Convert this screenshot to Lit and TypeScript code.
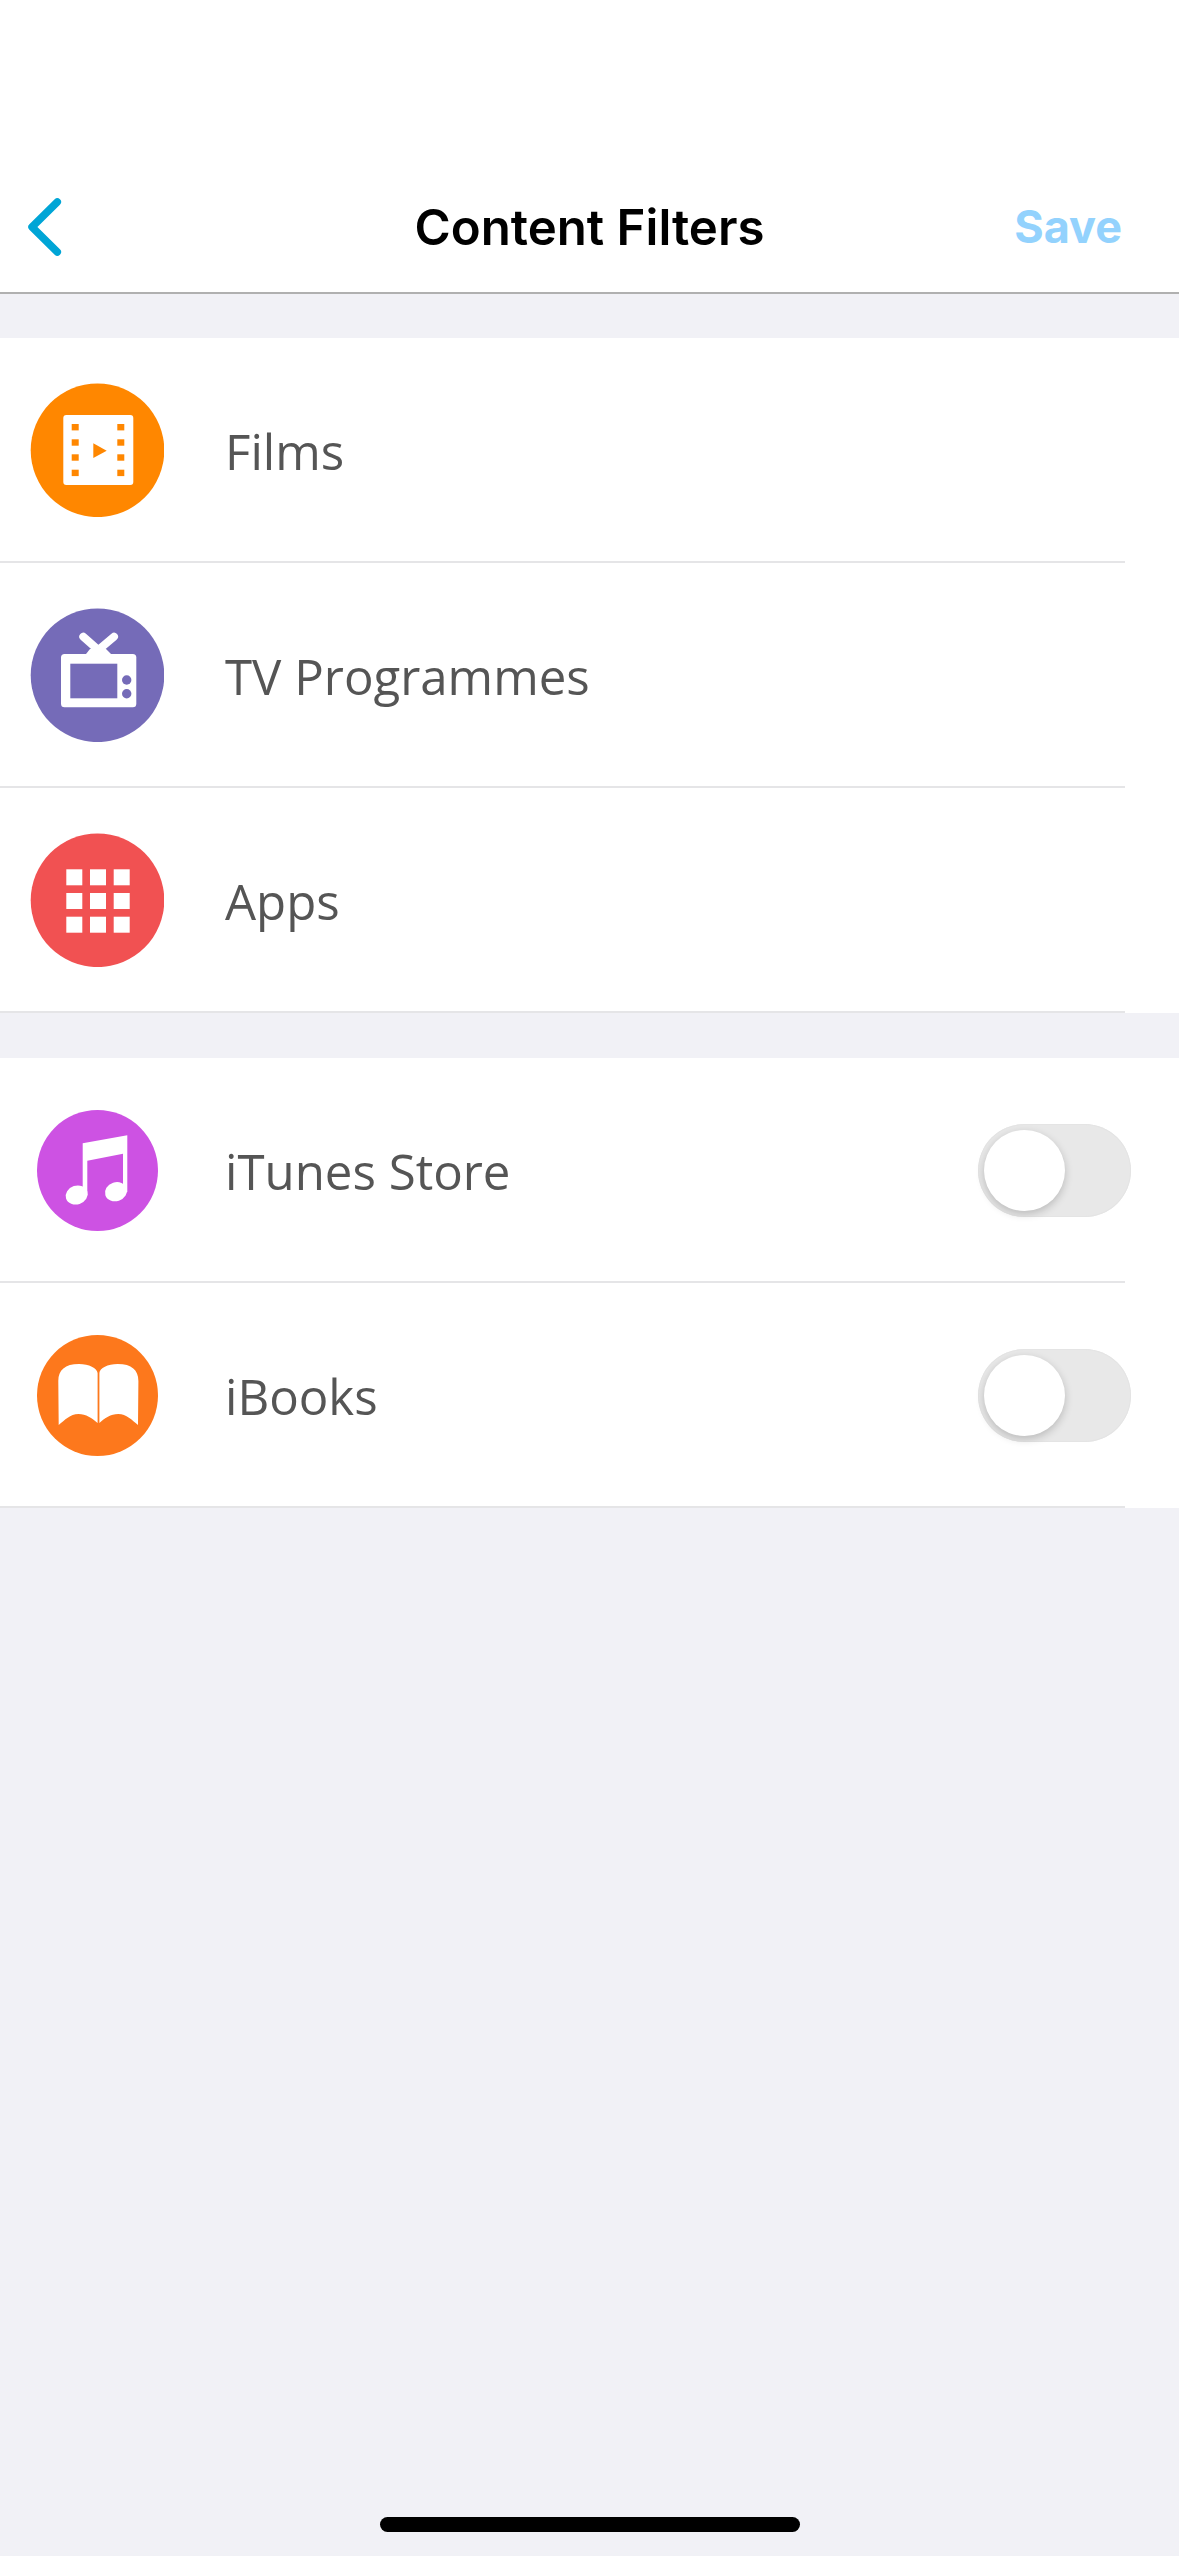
import { LitElement, html, css, svg } from "lit";
import { customElement } from "lit/decorators.js";

const filmHoles = [41, 56.3, 71.3, 86.7];
const appCoords = [36.3, 60, 83.7];

const icons = {
  films: html`<svg class="icon large" viewBox="0 0 134 134">
    <circle cx="67.5" cy="67.3" r="66.8" fill="#ff8700"></circle>
    <rect x="33.3" y="32" width="70" height="70" rx="3" fill="#fff"></rect>
    ${filmHoles.map(
      (y) => svg`<rect x="41.7" y=${y} width="7" height="6.4" fill="#ff8700"></rect>
        <rect x="87.3" y=${y} width="7" height="6.4" fill="#ff8700"></rect>`
    )}
    <path d="M63.3 60.3L76.7 67.7L63.3 75Z" fill="#ff8700"></path>
  </svg>`,
  tv: html`<svg class="icon large" viewBox="0 0 134 134">
    <circle cx="67.5" cy="67.3" r="66.8" fill="#756bb8"></circle>
    <path d="M53.3 28.7L68.3 42L84 28.7" fill="none" stroke="#fff" stroke-width="8" stroke-linecap="round" stroke-linejoin="round"></path>
    <path d="M56 46L60 41H76L81 46Z" fill="#fff"></path>
    <rect x="31" y="46" width="75.3" height="53.3" rx="3.5" fill="#fff"></rect>
    <rect x="40.3" y="55.7" width="47" height="34.6" fill="#756bb8"></rect>
    <circle cx="96.7" cy="72" r="4.7" fill="#756bb8"></circle>
    <circle cx="96.7" cy="85.7" r="4.7" fill="#756bb8"></circle>
  </svg>`,
  apps: html`<svg class="icon large" viewBox="0 0 134 134">
    <circle cx="67.5" cy="67.3" r="66.8" fill="#f15152"></circle>
    ${appCoords.map((y) =>
      appCoords.map((x) => svg`<rect x=${x} y=${y} width="16" height="16" fill="#fff"></rect>`)
    )}
  </svg>`,
  music: html`<svg class="icon small" viewBox="0 0 121 121">
    <circle cx="60.5" cy="60.5" r="60.5" fill="#cd52e3"></circle>
    <path d="M45.7 33.3L90.3 25.3V82H86V43.7L50.3 50.7V85H45.7Z" fill="#fff"></path>
    <ellipse cx="39.7" cy="85" rx="11.2" ry="9.4" transform="rotate(-18 39.7 85)" fill="#fff"></ellipse>
    <ellipse cx="79" cy="81.7" rx="11.2" ry="9.4" transform="rotate(-18 79 81.7)" fill="#fff"></ellipse>
  </svg>`,
  books: html`<svg class="icon small" viewBox="0 0 121 121">
    <circle cx="60.5" cy="60.5" r="60.5" fill="#fd781c"></circle>
    <path d="M21.7 90L21.3 46C21.3 35 28 29 42 29C52 29 60 33 60.6 38V88C55 83 49 79 41.5 79C33 79 28 85 21.7 90Z" fill="#fff"></path>
    <path d="M101 90L101.4 46C101.4 35 94.7 29 80.7 29C70.7 29 62.7 33 62.4 38V88C67.7 83 73.7 79 81.2 79C89.7 79 94.7 85 101 90Z" fill="#fff"></path>
  </svg>`,
};

@customElement("app-root")
export class AppRoot extends LitElement {
  static styles = css`
    :host {
      display: block;
      width: 1179px;
      height: 2556px;
      overflow: hidden;
      background: #f1f1f6;
    }
    .page {
      display: flex;
      flex-direction: column;
      height: 100%;
    }
    .nav {
      box-sizing: border-box;
      height: 294px;
      padding-top: 161px;
      background: #fff;
      border-bottom: 2px solid #b0b0b0;
      display: grid;
      grid-template-columns: 1fr auto 1fr;
      align-items: center;
      font-family: Inter, "Liberation Sans", sans-serif;
    }
    .back {
      display: block;
      width: 40px;
      height: 60px;
      margin-left: 25px;
    }
    .title {
      font-size: 49.2px;
      font-weight: 600;
      color: #000;
    }
    .save {
      justify-self: end;
      margin-right: 57px;
      font-size: 45px;
      font-weight: 700;
      color: #93d2fd;
    }
    .section {
      background: #fff;
      margin-top: 44px;
    }
    .section + .section {
      margin-top: 45px;
    }
    .row {
      height: 225px;
      display: flex;
      align-items: center;
      box-sizing: border-box;
      position: relative;
    }
    .slot {
      width: 195px;
      display: flex;
      flex: none;
    }
    .icon {
      display: block;
    }
    .large {
      width: 134px;
      height: 134px;
      margin: 0 0 1px 30px;
    }
    .small {
      width: 121px;
      height: 121px;
      margin-left: 37px;
    }
    .label {
      margin-left: 30px;
      font-family: "Open Sans", "Liberation Sans", sans-serif;
      font-size: 49.2px;
      color: #555555;
    }
    .rule {
      position: absolute;
      left: 0;
      right: 54px;
      bottom: 0;
      height: 2px;
      background: #e5e5e7;
    }
    .toggle {
      position: relative;
      margin-left: auto;
      margin-right: 48px;
      width: 153px;
      height: 93px;
      border-radius: 47px;
      background: #e8e8e8;
      box-shadow: inset 0 0 0 1px #e4e4e4;
      flex: none;
    }
    .knob {
      position: absolute;
      left: 6px;
      top: 6px;
      width: 81px;
      height: 81px;
      border-radius: 50%;
      background: #fff;
      box-shadow: 0 3px 9px rgba(0, 0, 0, 0.2);
    }
    .home {
      width: 420px;
      height: 15px;
      border-radius: 8px;
      background: #000;
      margin: auto auto 24px;
    }
  `;

  private row(icon: unknown, label: string, toggle = false) {
    return html`<div class="row">
      <div class="slot">${icon}</div>
      <div class="label">${label}</div>
      ${toggle ? html`<div class="toggle"><div class="knob"></div></div>` : ""}
      <div class="rule"></div>
    </div>`;
  }

  render() {
    return html`<div class="page">
      <header class="nav">
        <svg class="back" viewBox="0 0 40 60">
          <path d="M32.3 5L7 30L32.3 55" fill="none" stroke="#00a5d6" stroke-width="7.5" stroke-linecap="round" stroke-linejoin="round"></path>
        </svg>
        <div class="title">Content Filters</div>
        <div class="save">Save</div>
      </header>
      <section class="section">
        ${this.row(icons.films, "Films")}
        ${this.row(icons.tv, "TV Programmes")}
        ${this.row(icons.apps, "Apps")}
      </section>
      <section class="section">
        ${this.row(icons.music, "iTunes Store", true)}
        ${this.row(icons.books, "iBooks", true)}
      </section>
      <div class="home"></div>
    </div>`;
  }
}
